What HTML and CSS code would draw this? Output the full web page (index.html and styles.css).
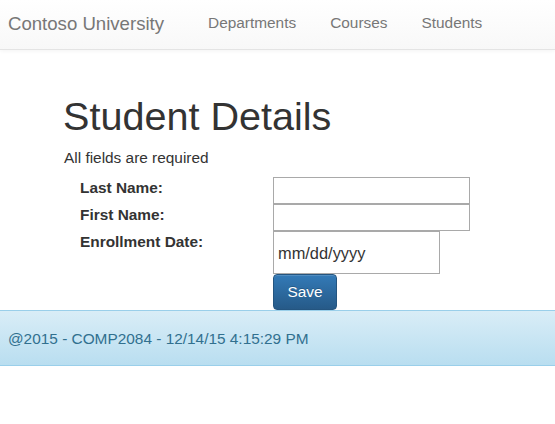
FILE: index.html
```html
<!DOCTYPE html>
<html>
<head>
<meta charset="utf-8">
<link rel="stylesheet" href="styles.css">
</head>
<body>
<nav class="navbar">
  <a class="brand" href="#">Contoso University</a>
  <ul class="nav">
    <li><a href="#">Departments</a></li>
    <li><a href="#">Courses</a></li>
    <li><a href="#">Students</a></li>
  </ul>
</nav>
<main class="main">
  <h1 class="title">Student Details</h1>
  <p class="note">All fields are required</p>
  <div class="form">
    <label class="lbl" for="ln">Last Name:</label>
    <input class="txt" id="ln" type="text">
    <label class="lbl" for="fn">First Name:</label>
    <input class="txt" id="fn" type="text">
    <label class="lbl" for="ed">Enrollment Date:</label>
    <div class="date" id="ed">mm/dd/yyyy</div>
    <span></span>
    <div><button class="btn" type="button">Save</button></div>
  </div>
</main>
<footer class="footer">@2015 - COMP2084 - 12/14/15 4:15:29 PM</footer>
</body>
</html>
```
FILE: styles.css
```css
* { box-sizing: border-box; }
html, body { margin: 0; padding: 0; background: #fff; }
body {
  font-family: "Liberation Sans", Arial, sans-serif;
  font-size: 15.4px;
  line-height: 22px;
  color: #333;
}
.navbar {
  height: 50px;
  display: flex;
  align-items: center;
  background: linear-gradient(to bottom, #ffffff 0%, #f8f8f8 100%);
  border-bottom: 1px solid #e4e4e4;
  box-shadow: 0 1px 4px rgba(0,0,0,0.05);
}
.brand {
  font-size: 18.6px;
  color: #777;
  text-decoration: none;
  padding: 0 0 1px 8px;
  margin-right: 27px;
}
.nav {
  list-style: none;
  margin: 0;
  padding: 0 0 3px 0;
  display: flex;
}
.nav a {
  display: block;
  padding: 0 17px;
  color: #777;
  text-decoration: none;
  font-size: 15.4px;
}
.main {
  padding: 0 0 0 64px;
}
.title {
  font-size: 39.6px;
  font-weight: 400;
  line-height: 43.6px;
  margin: 45px 0 8px -1px;
  color: #333;
}
.note {
  margin: 0 0 8px 0;
}
.form {
  display: grid;
  grid-template-columns: 209px auto;
  justify-content: start;
  align-items: start;
}
.lbl {
  font-weight: 700;
  padding-left: 16px;
  line-height: 22px;
  color: #333;
}
.txt {
  width: 197px;
  height: 27px;
  margin: 0;
  border: 1px solid #a9a9a9;
  padding: 2px 4px;
  font: inherit;
}
.date {
  width: 167px;
  height: 43px;
  border: 1px solid #a9a9a9;
  padding: 0 0 0 4px;
  font-size: 16.4px;
  line-height: 42px;
  color: #333;
}
.btn {
  width: 64px;
  height: 36px;
  margin: 0;
  font: inherit;
  color: #fff;
  border: 1px solid #245580;
  border-radius: 4px;
  background: linear-gradient(to bottom, #337ab7 0%, #265a88 100%);
  box-shadow: inset 0 1px 0 rgba(255,255,255,0.15);
  text-shadow: 0 -1px 0 rgba(0,0,0,0.2);
  padding: 0;
}
.footer {
  height: 56px;
  border-top: 1px solid #9acfea;
  border-bottom: 1px solid #9acfea;
  background: linear-gradient(to bottom, #d9edf7 0%, #b9def0 100%);
  color: #31708f;
  padding: 17px 0 0 8px;
  line-height: 22px;
}
```
